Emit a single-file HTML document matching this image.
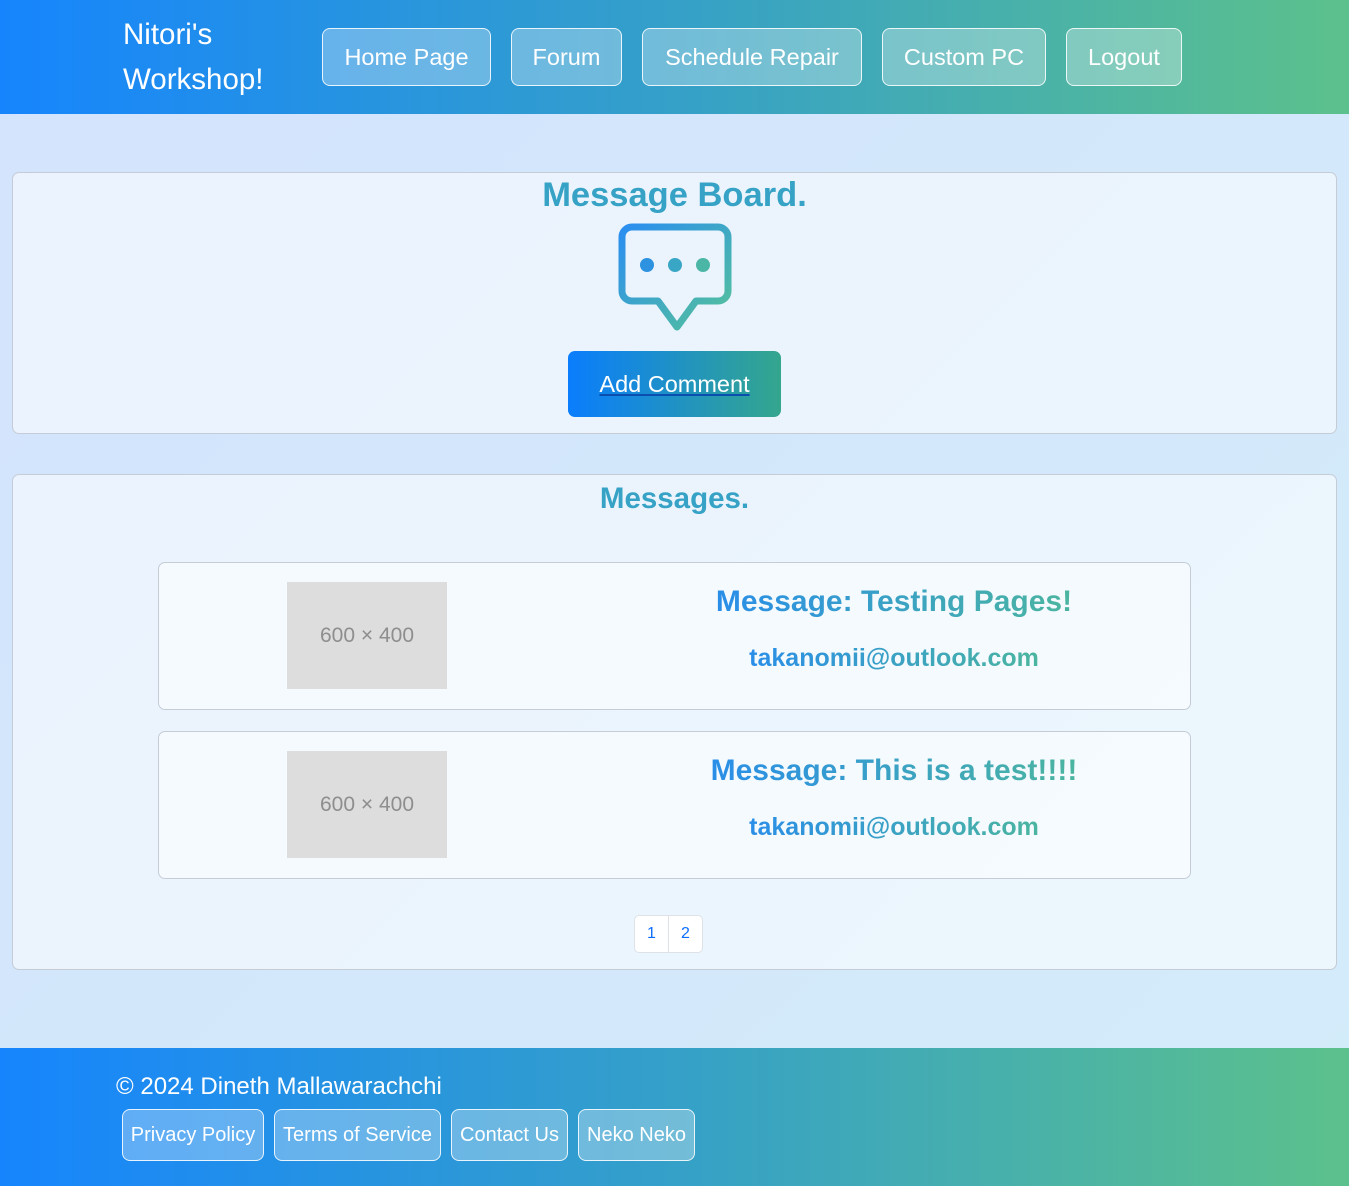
<!DOCTYPE html>
<html><head><meta charset="utf-8"><style>
*{box-sizing:border-box;margin:0;padding:0}
body{width:1349px;height:1186px;font-family:"Liberation Sans",sans-serif;background:linear-gradient(135deg,#d3e3fc,#d3ecfa);position:relative;overflow:hidden}
.hdr{position:absolute;left:0;top:0;width:1349px;height:114px;background:linear-gradient(90deg,#1685fd,#35a0c8 50%,#5cc18c)}
.brand{position:absolute;left:123px;top:12px;color:#fff;font-size:29.5px;line-height:45px}
.nb{position:absolute;top:28px;height:58px;border:1px solid rgba(255,255,255,.85);border-radius:8px;background:rgba(255,255,255,.3);color:#fff;font-size:23.5px;display:flex;align-items:center;justify-content:center}
.card{position:absolute;left:12px;width:1325px;border:1px solid #c5ccd6;border-radius:7px;background:rgba(255,255,255,.55)}
.gt{background:linear-gradient(90deg,#2a8ee8,#4bb5a0);-webkit-background-clip:text;background-clip:text;color:transparent;font-weight:bold}
h2{font-size:34.5px;text-align:center;color:#36a2c5;font-weight:bold}
.btn{position:absolute;left:555px;top:178px;width:213px;height:66px;border-radius:7px;background:linear-gradient(90deg,#0a7dfd,#34a68d);color:#fff;font-size:23.5px;text-decoration:underline;text-decoration-color:#0a4fb0;display:flex;align-items:center;justify-content:center}
.msg{position:absolute;left:145px;width:1033px;height:148px;border:1px solid #c5ccd6;border-radius:7px;background:rgba(255,255,255,.5)}
.ph{position:absolute;left:128px;top:19px;width:160px;height:107px;background:#dddddd;color:#8e8e8e;font-size:21px;display:flex;align-items:center;justify-content:center}
.mt{position:absolute;left:480px;width:510px;text-align:center;font-size:30px}
.em{position:absolute;left:480px;width:510px;text-align:center;font-size:25px;top:81px}
.ftr{position:absolute;left:0;top:1048px;width:1349px;height:138px;background:linear-gradient(90deg,#1685fd,#35a0c8 50%,#5cc18c)}
.fb{position:absolute;top:61px;height:52px;border:1px solid rgba(255,255,255,.85);border-radius:8px;background:rgba(255,255,255,.3);color:#fff;font-size:20px;display:flex;align-items:center;justify-content:center}
</style></head><body>
<div class="hdr">
<div class="brand">Nitori's<br>Workshop!</div>
<div class="nb" style="left:322px;width:169px">Home Page</div>
<div class="nb" style="left:511px;width:111px">Forum</div>
<div class="nb" style="left:642px;width:220px">Schedule Repair</div>
<div class="nb" style="left:882px;width:164px">Custom PC</div>
<div class="nb" style="left:1066px;width:116px">Logout</div>
</div>
<div class="card" style="top:172px;height:262px">
<h2 style="margin-top:3px">Message Board.</h2>
<svg style="position:absolute;left:605px;top:50px" width="114" height="110" viewBox="0 0 114 110">
<defs><linearGradient id="g" x1="0" y1="0" x2="1" y2="1"><stop offset="0" stop-color="#2a8ef0"/><stop offset="1" stop-color="#55c29a"/></linearGradient></defs>
<path d="M14 4H100A10 10 0 0 1 110 14V68A10 10 0 0 1 100 78H78L59 104L40 78H14A10 10 0 0 1 4 68V14A10 10 0 0 1 14 4Z" fill="none" stroke="url(#g)" stroke-width="7" stroke-linejoin="round"/>
<circle cx="29" cy="42" r="7" fill="#2d92e0"/><circle cx="57" cy="42" r="7" fill="#3aa6c6"/><circle cx="85" cy="42" r="7" fill="#4cb6a6"/>
</svg>
<div class="btn">Add Comment</div>
</div>
<div class="card" style="top:474px;height:496px">
<h2 style="font-size:29.5px;margin-top:7px">Messages.</h2>
<div class="msg" style="top:87px"><div class="ph">600 × 400</div><div class="mt" style="top:22px"><span class="gt">Message: Testing Pages!</span></div><div class="em"><span class="gt">takanomii@outlook.com</span></div></div>
<div class="msg" style="top:256px"><div class="ph">600 × 400</div><div class="mt" style="top:22px"><span class="gt">Message: This is a test!!!!</span></div><div class="em"><span class="gt">takanomii@outlook.com</span></div></div>
<div style="position:absolute;left:621px;top:440px;width:69px;height:38px;border:1px solid #dee2e6;border-radius:5px;background:#fff;display:flex;color:#0d6efd;font-size:16px">
<div style="width:34px;display:flex;align-items:center;justify-content:center;border-right:1px solid #dee2e6">1</div><div style="flex:1;display:flex;align-items:center;justify-content:center">2</div></div>
</div>
<div class="ftr">
<div style="position:absolute;left:116px;top:25px;color:#fff;font-size:24px">© 2024 Dineth Mallawarachchi</div>
<div class="fb" style="left:122px;width:142px">Privacy Policy</div>
<div class="fb" style="left:274px;width:167px">Terms of Service</div>
<div class="fb" style="left:451px;width:117px">Contact Us</div>
<div class="fb" style="left:578px;width:117px">Neko Neko</div>
</div>
</body></html>
